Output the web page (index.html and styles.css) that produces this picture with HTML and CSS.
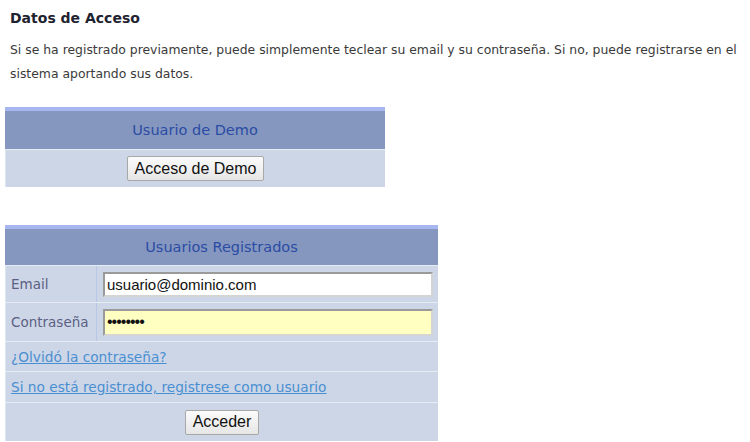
FILE: index.html
```html
<!DOCTYPE html>
<html lang="es">
<head>
<meta charset="UTF-8">
<title>Datos de Acceso</title>
<link rel="stylesheet" href="styles.css">
</head>
<body>

<div class="page">
  <h1>Datos de Acceso</h1>
  <p class="intro">Si se ha registrado previamente, puede simplemente teclear su email y su contraseña. Si no, puede registrarse en el sistema aportando sus datos.</p>

  <!-- Demo -->
  <div class="panel panel-demo">
    <div class="panel-head">Usuario de Demo</div>
    <div class="row row-center">
      <button class="btn">Acceso de Demo</button>
    </div>
  </div>

  <!-- Login -->
  <form class="panel panel-login" onsubmit="return false;">
    <div class="panel-head">Usuarios Registrados</div>
    <div class="row field">
      <label class="label" for="email">Email</label>
      <div class="cell"><input class="input" id="email" type="text" value="usuario@dominio.com"></div>
    </div>
    <div class="row field field-pass">
      <label class="label" for="pass">Contraseña</label>
      <div class="cell"><input class="input input-pass" id="pass" type="password" value="12345678"></div>
    </div>
    <div class="row row-link"><a href="#">¿Olvidó la contraseña?</a></div>
    <div class="row row-link"><a href="#">Si no está registrado, registrese como usuario</a></div>
    <div class="row row-center row-last">
      <button class="btn">Acceder</button>
    </div>
  </form>
</div>

</body>
</html>
```

FILE: styles.css
```css
body {
  margin: 0;
  background: #fff;
  font-family: "DejaVu Sans", sans-serif;
  color: #333;
}
.page {
  padding: 0 5px;
}
h1 {
  margin: 0;
  padding: 10px 5px 0;
  font-size: 14px;
  line-height: 17px;
  color: #1f2330;
}
.intro {
  margin: 11px 0 0 5px;
  font-size: 12.4px;
  line-height: 24px;
  color: #3a3a3a;
}
/* Panels */
.panel {
  display: flex;
  flex-direction: column;
  border-top: 4px solid #a7b6ee;
  margin: 0;
}
.panel-demo {
  width: 380px;
  margin-top: 21px;
}
.panel-login {
  width: 433px;
  margin-top: 38px;
}
.panel-head {
  height: 38px;
  background: #8697bf;
  color: #2a4ca4;
  font-size: 14.5px;
  display: flex;
  align-items: center;
  justify-content: center;
  border-bottom: 1px solid #e6ebf4;
}
.panel-login .panel-head {
  height: 36px;
}
.row {
  background: #cdd6e6;
  border-bottom: 1px solid #e6ebf4;
  border-left: 1px solid #dfe5f0;
}
.row-center {
  height: 37px;
  display: flex;
  align-items: center;
  justify-content: center;
}
.panel-demo .row-center {
  border-bottom: none;
}
.row-last {
  height: 38px;
  border-bottom: none;
}
/* Form rows */
.field {
  display: grid;
  grid-template-columns: 91px 1fr;
  height: 36px;
}
.field-pass {
  height: 38px;
}
.label {
  display: flex;
  align-items: center;
  padding-left: 5px;
  font-size: 13.5px;
  color: #5b5f84;
  border-right: 1px solid #b9c7e6;
}
.cell {
  display: flex;
  align-items: center;
  padding: 0 5px 0 6px;
}
.input {
  width: 100%;
  height: 25px;
  box-sizing: border-box;
  border: 2px solid;
  border-color: #9a9a9a #d4d4d4 #d4d4d4 #9a9a9a;
  background: #fff;
  font-family: "Liberation Sans", Arial, sans-serif;
  font-size: 15px;
  color: #111;
  padding: 0 2px;
}
.input-pass {
  background: #ffffc2;
  height: 27px;
  font-size: 16px;
  letter-spacing: -1px;
}
.row-link {
  height: 29px;
  display: flex;
  align-items: center;
  padding-left: 5px;
  font-size: 13.7px;
}
.row-link + .row-link {
  height: 30px;
}
.row-link a {
  color: #4a8fd2;
  text-decoration: underline;
}
/* Buttons */
.btn {
  font-family: "Liberation Sans", Arial, sans-serif;
  font-size: 16px;
  color: #111;
  height: 25px;
  padding: 0 7px;
  background: linear-gradient(#fbfbfb, #e6e6e6);
  border: 1px solid #a8a8a8;
  border-radius: 2px;
  cursor: pointer;
}
```
